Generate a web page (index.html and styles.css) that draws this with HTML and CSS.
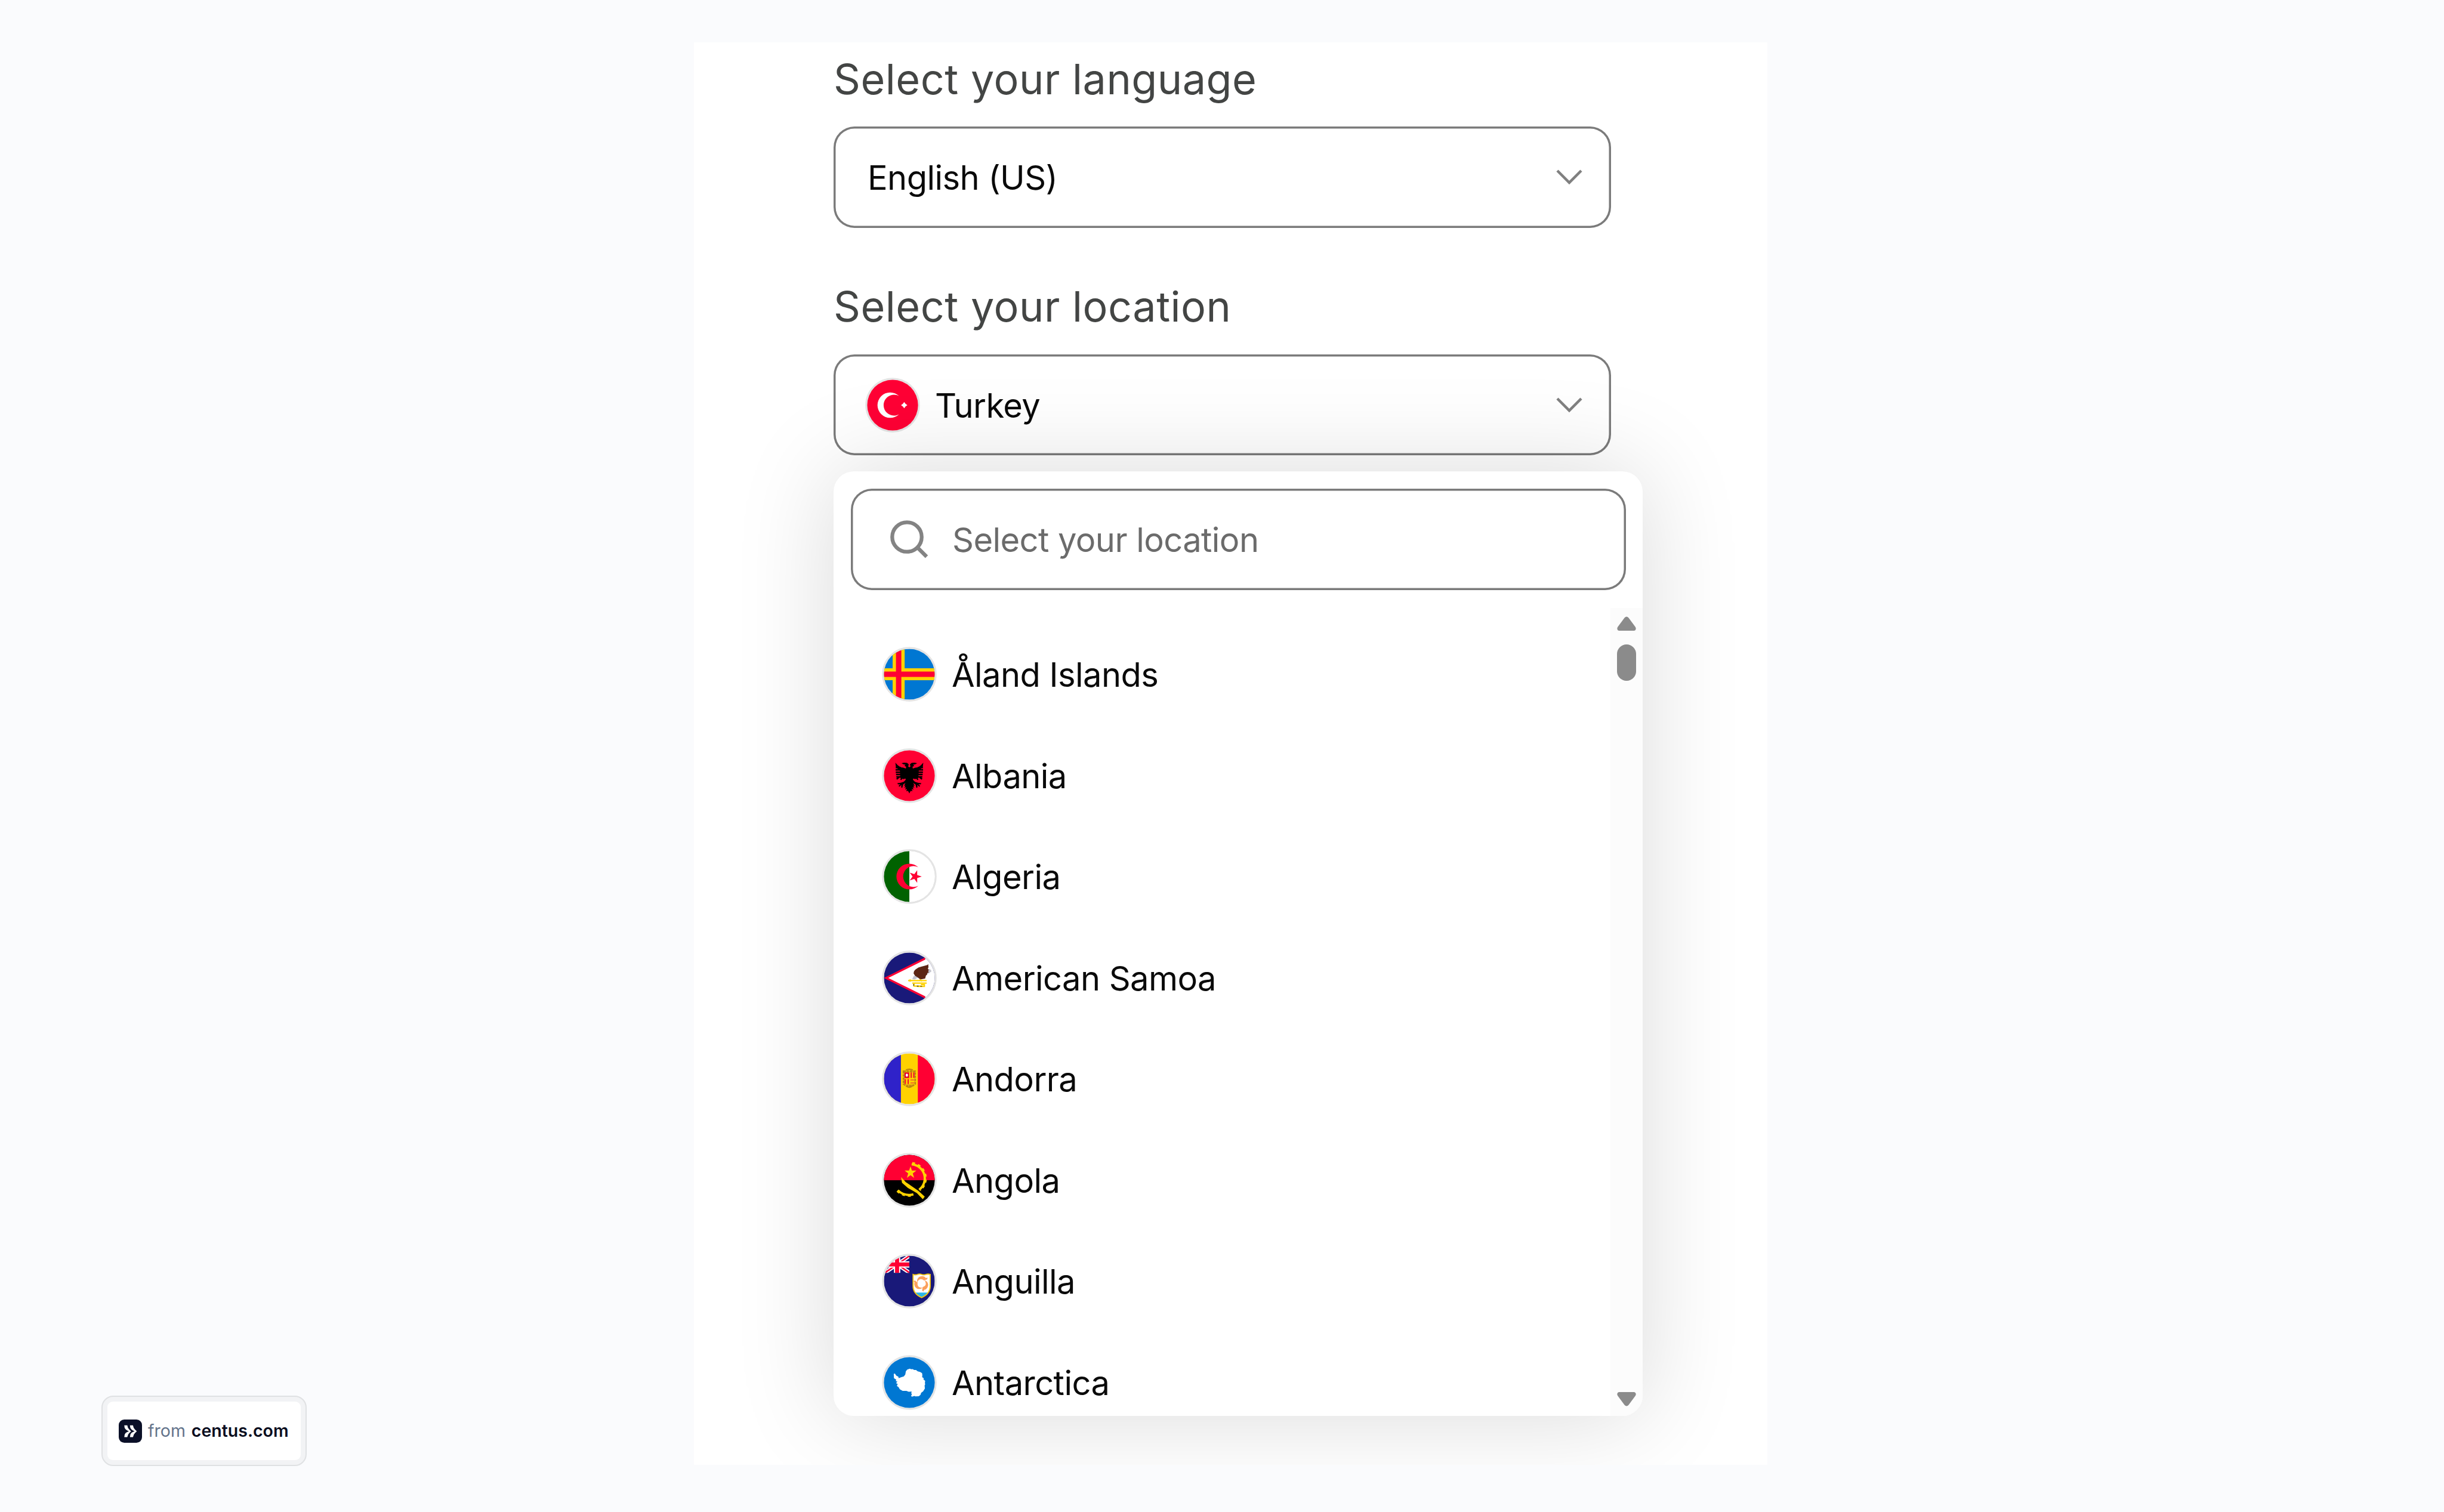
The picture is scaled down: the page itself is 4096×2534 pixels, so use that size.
FILE: index.html
```
<!DOCTYPE html>
<html lang="en">
<head>
  <meta charset="UTF-8" />
  <meta name="viewport" content="width=device-width, initial-scale=1.0"/>
  <title>Select your location</title>
  <link rel="stylesheet" href="styles.css">
</head>
<body>
<div class="page">
  <div class="side">
    <div class="badge">
      <div class="badge-inner">
        <svg class="badge-logo" viewBox="0 0 40 40">
          <rect width="40" height="40" rx="9.5" fill="#0b1028"/>
          <path id="chev" d="M9.5 10h5.2q.6 5 3.6 7.400l3 2.800-3 2.800q-3 2.400-3.600 7.200H9.500q0-4.800 2.400-7 2.200-2 5.600-3-3.400-1-5.600-3.200Q9.500 14.800 9.500 10z" fill="#fff"/>
          <use href="#chev" x="9.8"/>
        </svg>
        <span class="badge-from">from</span>
        <span class="badge-name">centus.com</span>
      </div>
    </div>
  </div>
  <main class="card">
    <div class="field">
      <label class="label">Select your language</label>
      <div class="select">
        <span>English (US)</span>
        <svg class="chevron" viewBox="0 0 44 26"><path d="M2 2l20 20L42 2"/></svg>
      </div>
    </div>
    <div class="field">
      <label class="label">Select your location</label>
      <div class="select">
        <svg class="flag flag-selected" viewBox="-3.5 -3.5 95 95">
          <circle class="ring" cx="44" cy="44" r="45.5"/>
          <circle cx="44" cy="44" r="44" fill="#ff0035"/>
          <path d="M55.2 28.3A22 22 0 1 0 55.2 59.7A18 18 0 1 1 55.2 28.3z" fill="#fff"/>
          <path d="M64 38.5l2.3 3.2 3.2 2.3-3.2 2.3-2.3 3.2-2.3-3.2-3.2-2.3 3.2-2.3z" fill="#fff"/>
        </svg>
        <span>Turkey</span>
        <svg class="chevron" viewBox="0 0 44 26"><path d="M2 2l20 20L42 2"/></svg>
      </div>
      <div class="dropdown">
        <div class="search">
          <svg class="search-icon" viewBox="0 0 66 66"><circle cx="29" cy="29" r="24.7"/><path d="M46.5 46.5L62 62"/></svg>
          <span>Select your location</span>
        </div>
        <div class="list">
          <div class="options">
            <div class="option">
              <svg class="flag" viewBox="-3.5 -3.5 95 95">
                <clipPath id="round"><circle cx="44" cy="44" r="44"/></clipPath>
                <circle class="ring" cx="44" cy="44" r="45.5"/>
                <g clip-path="url(#round)">
                  <rect width="88" height="88" fill="#0077d2"/>
                  <path d="M25.5 0v88M0 44h88" stroke="#ffd200" stroke-width="20.8"/>
                  <path d="M25.5 0v88M0 44h88" stroke="#ff0033" stroke-width="9.3"/>
                </g>
              </svg>
              <span>Åland Islands</span>
            </div>
            <div class="option">
              <svg class="flag" viewBox="-3.5 -3.5 95 95">
                <circle class="ring" cx="44" cy="44" r="45.5"/>
                <circle cx="44" cy="44" r="44" fill="#ff0033"/>
                <g id="eagle">
                  <path d="M44.5 30l-2.5-2 1-3.500-3-2.700-5-.3-4.500.8 3.500 2 3.500.5-2 2.200 3 1.500-.5 3-4.500-1.500-4.500-.5-5-3.500-4.200-4.500 1 8 7 6 .5 12 5.500 2.500 3.500-1 .5 2-3.500 3.500-6 2-5 .5 1 2 4-.3-3 3 1.500 1.500 3.500-3.500-.5 4.500 2 1 1.500-6 4-2.500-2.500 5 2.500-1-2 4.500 3-1.500-1.500 4.500 3-1.500-1 4.500 2.500-1L44 74l.5.500z"/>
                  <path d="M20.5 30h9M20.2 34h9M20.5 38h9M21 42h9M21.5 46h10M26 47l-4 3M33 46l-4 5" stroke="#000" stroke-width="2.5"/>
                </g>
                <use href="#eagle" transform="matrix(-1 0 0 1 88 0)"/>
              </svg>
              <span>Albania</span>
            </div>
            <div class="option">
              <svg class="flag" viewBox="-3.5 -3.5 95 95">
                <circle class="ring" cx="44" cy="44" r="45.5"/>
                <circle cx="44" cy="44" r="44" fill="#fff"/>
                <path d="M44 0a44 44 0 0 0 0 88z" fill="#006200"/>
                <path d="M59.5 28A22.3 22.3 0 1 0 59.5 60A18 18 0 1 1 59.5 28zM65.5 44l-7.9-2.6 0-8.3-5 6.700-7.900-2.600 4.900 6.800-4.900 6.800 7.900-2.600 5 6.700 0-8.300z" fill="#ff0033"/>
              </svg>
              <span>Algeria</span>
            </div>
            <div class="option">
              <svg class="flag" viewBox="-3.5 -3.5 95 95">
                <circle class="ring" cx="44" cy="44" r="45.5"/>
                <g clip-path="url(#round)">
                  <rect width="88" height="88" fill="#191979"/>
                  <path d="M0 44L71.5 8.5v71z" fill="#ff0033"/>
                  <path d="M7.5 44L71.5 12.3V0H88v88H71.5V75.7z" fill="#fff"/>
                  <path d="M75 29l4.500-.5 3 3.500-4.500 4-5 1.500zM57 39l-5.500 2-2.500 5 4.500.5 5-3z" fill="#c4c4cc"/>
                  <path d="M76.700 20l-1.500 1.500-5.500 1.500-5 1.300-5 1.700-5 3.300-2.500 2.700-.9 4 2.500 4 4.200 2.700 5 4 8.300-1.700 1.500-5.500 1.800-1 .5-3 2.500-1-1-2.200 1-2.300-1.500-2.200 1-2.300z" fill="#5c2614"/>
                  <path d="M42 48.5h32M62 46.5l4 3M49 53h25M52 54v4h12M58 58.5h12v-3h-6" fill="none" stroke="#ffd200" stroke-width="2.3"/>
                  <path d="M41.5 48.5l4-2.500 2.500 2.500-2.500 2.200z" fill="#ffd200"/>
                  <path d="M51.5 54.5v3M57 58h3M63 58.5h3" stroke="#222" stroke-width="1.2"/>
                </g>
              </svg>
              <span>American Samoa</span>
            </div>
            <div class="option">
              <svg class="flag" viewBox="-3.5 -3.5 95 95">
                <circle class="ring" cx="44" cy="44" r="45.5"/>
                <g clip-path="url(#round)">
                  <rect width="88" height="88" fill="#ffd200"/>
                  <rect width="29.4" height="88" fill="#2f22c9"/>
                  <rect x="58.7" width="29.3" height="88" fill="#ff0033"/>
                  <path d="M34 31h20v22l-5 3.500h-10l-5-3.500z" fill="#e2a818" stroke="#bd850f" stroke-width="3" stroke-dasharray="4 1.5"/>
                  <path d="M38 29q6-3 12 0M39 56.500q5 4 10 0" fill="none" stroke="#bd850f" stroke-width="2.5"/>
                  <rect x="35.7" y="32.8" width="17" height="20.7" fill="#ffd200"/>
                  <rect x="35.7" y="33" width="8" height="9.7" fill="#e2002c"/>
                  <ellipse cx="39.7" cy="37.7" rx="2" ry="2.8" fill="#fff"/>
                  <path d="M47.2 33v9.5M51.7 33v9.5M37 44.5v8.5M42 44.5v8.5" stroke="#f0142c" stroke-width="2.2"/>
                  <path d="M46 46h6.5M46 51h6.5" stroke="#f0642c" stroke-width="1.8"/>
                </g>
              </svg>
              <span>Andorra</span>
            </div>
            <div class="option">
              <svg class="flag" viewBox="-3.5 -3.5 95 95">
                <circle class="ring" cx="44" cy="44" r="45.5"/>
                <circle cx="44" cy="44" r="44"/>
                <path d="M0 44a44 44 0 0 1 88 0z" fill="#ff0033"/>
                <path d="M46 20l2.500 7.300H56.200L50 32l2.200 7.800L46 35.200l-6.200 4.600L42 32l-6.200-4.700h7.700z" fill="#ffd200"/>
                <g fill="none" stroke="#ffd200">
                  <path d="M48 16.5A24.5 24.5 0 0 1 61 60.5M24 61.5A29 29 0 0 0 51 68.5" stroke-width="4"/>
                  <path d="M49 14.2A26.7 26.7 0 0 1 62.5 61.5M23 62.7A31.2 31.2 0 0 0 51.5 70" stroke-width="3.5" stroke-dasharray="5 5.2"/>
                </g>
                <path d="M29.7 38.7l8.300 8.600 21.700 15 11 10-3.400 4.400-10.300-10.500-15.700-9-10-8.700z" fill="#ffd200"/>
              </svg>
              <span>Angola</span>
            </div>
            <div class="option">
              <svg class="flag" viewBox="-3.5 -3.5 95 95">
                <clipPath id="canton"><rect width="44" height="29.7"/></clipPath>
                <circle class="ring" cx="44" cy="44" r="45.5"/>
                <g clip-path="url(#round)">
                  <rect width="88" height="88" fill="#191979"/>
                  <g clip-path="url(#canton)">
                    <path d="M1 0l44 30M45 0L1 30" stroke="#fff" stroke-width="6.5"/>
                    <path d="M1 0l44 30M45 0L1 30" stroke="#ff0033" stroke-width="2.6"/>
                    <path d="M22.8 0v30M0 15.2h44" stroke="#fff" stroke-width="11"/>
                    <path d="M22.8 0v30M0 15.2h44" stroke="#ff0033" stroke-width="7"/>
                  </g>
                  <path d="M50.5 32.5q4 1.300 7.500 0 3.700-1.500 7.300 0 3.700 1.500 7.300 0 3.700-1.300 7.500 0v20Q80 66 65.300 72.500 50.500 66 50.500 52.500z" fill="#fff"/>
                  <path d="M53.5 64h23.500q-3.500 5-11.700 8.500Q57 69 53.500 64z" fill="#29b6e8"/>
                  <path d="M50.5 32.5q4 1.300 7.500 0 3.700-1.500 7.300 0 3.700 1.500 7.300 0 3.700-1.300 7.500 0v20Q80 66 65.300 72.500 50.500 66 50.500 52.500z" fill="none" stroke="#f0c414" stroke-width="2"/>
                  <g fill="#fba05c">
                    <path id="dolphin" d="M57.500 42q2-6.500 9-6.500 4 .2 6 3l3-.5-.5 3-3 1-2.500 1q-4-3.500-7.500-2-3 1.500-4.500 5.500z"/>
                    <use href="#dolphin" transform="rotate(120 65 48)"/>
                    <use href="#dolphin" transform="rotate(240 65 48)"/>
                  </g>
                </g>
              </svg>
              <span>Anguilla</span>
            </div>
            <div class="option">
              <svg class="flag" viewBox="-3.5 -3.5 95 95">
                <circle class="ring" cx="44" cy="44" r="45.5"/>
                <circle cx="44" cy="44" r="44" fill="#0077d2"/>
                <path d="M17 29l2-.5 2.500 3.500 3.500 2 .5 2.500 4-1.500 5-1.500 2.500-3.500 1-5.500 2.500-3 4.500-1.500 2 1 2.500-.3 3 1.500 3 0 3 2.500 4 1 3.500 2 .5 3.500-.3 3.500 3 2-1 1.500 3.200 3-.5 3.500.5 2.500-1 2 .5 5-3 5-3.500 2.500-1 3.500-3 2.500-6 .3-1.500-.8-4.500 1.300-1.500-1.500 1.500-2-1-2.500.5-3-5 .5-4-1.500-6.500 0-5-3-2-3.500-3-2 1.500-3.500-3-1.500 2.500-2.500-3-1 1-2.500-4-2.500z" fill="#fff"/>
              </svg>
              <span>Antarctica</span>
            </div>
          </div>
          <div class="scrollbar">
            <svg class="arrow" viewBox="0 0 32 24"><path d="M12.5 2.500q3.500-4 7 0L31 18q2 4.500-2 6H3q-4-1.500-2-6z"/></svg>
            <div class="thumb"></div>
            <svg class="arrow arrow-down" viewBox="0 0 32 24"><path d="M12.500 2.500q3.500-4 7 0L31 18q2 4.500-2 6H3q-4-1.500-2-6z"/></svg>
          </div>
        </div>
      </div>
    </div>
  </main>
</div>
</body>
</html>
```
FILE: styles.css
```
* {
  box-sizing: border-box;
}
body {
  margin: 0;
  width: 4096px;
  height: 2534px;
  overflow: hidden;
  background: #fafbfd;
  font-family: Inter, "Liberation Sans", sans-serif;
  font-size: 56px;
  letter-spacing: -0.55px;
  color: #0a0a0a;
}
.page {
  display: flex;
  padding-top: 71px;
}
.side {
  width: 1163px;
  height: 2386px;
  padding-left: 170px;
  display: flex;
  align-items: flex-end;
}
.badge {
  width: 344px;
  height: 118px;
  padding: 8px;
  border: 2px solid #dfe1e3;
  border-radius: 20px;
  background: #f2f3f5;
}
.badge-inner {
  height: 98px;
  padding-left: 19px;
  display: flex;
  align-items: center;
  border-radius: 9px;
  background: #fff;
  font-size: 28.5px;
  letter-spacing: 0;
}
.badge-logo {
  width: 39px;
  height: 39px;
  margin-right: 10px;
}
.badge-from,
.badge-name {
  padding-bottom: 2px;
}
.badge-from {
  color: #64748b;
  margin-right: 10px;
}
.badge-name {
  color: #0b0e1e;
  font-weight: 600;
}
.card {
  width: 1799px;
  height: 2384px;
  padding: 12px 263px 0 234px;
  background: #fff;
  overflow: hidden;
}
.field {
  position: relative;
  margin-bottom: 82.7px;
}
.label {
  display: block;
  margin-bottom: 29.3px;
  font-size: 70px;
  line-height: 100px;
  letter-spacing: 0.55px;
  color: #434544;
}
.select,
.search {
  display: flex;
  align-items: center;
  height: 169.5px;
  border-radius: 35px;
  box-shadow: inset 0 0 0 3.5px #7b7b7b;
}
.select {
  width: 1303px;
  padding: 0 48px 0 57px;
}
.select span,
.search span,
.option span {
  padding-top: 2px;
}
.chevron {
  width: 44px;
  height: 26px;
  margin-left: auto;
  fill: none;
  stroke: #808080;
  stroke-width: 4.5;
}
.flag {
  width: 92px;
  height: 92px;
  flex: none;
  margin-right: 25px;
}
.flag-selected {
  margin-left: -4px;
}
.ring {
  fill: none;
  stroke: #e4e4e4;
  stroke-width: 3.4;
}
/* menu floats over the card */
.dropdown {
  position: absolute;
  top: 326px;
  left: 0;
  width: 1356px;
  height: 1583px;
  padding-top: 29px;
  border-radius: 34px;
  background: #fff;
  box-shadow: 0 0 165px rgba(0, 0, 0, 0.15);
}
.search {
  margin: 0 28px 0 29px;
  padding-left: 65px;
  color: #6b6b6b;
}
.search-icon {
  width: 66px;
  height: 66px;
  margin-right: 39px;
  fill: none;
  stroke: #838383;
  stroke-width: 6.3;
}
.list {
  display: flex;
  height: 1354px;
  margin-top: 30px;
  overflow: hidden;
  border-radius: 0 0 34px 34px;
}
.options {
  flex: 1;
  padding-top: 26.5px;
}
.option {
  display: flex;
  align-items: center;
  height: 169.5px;
  padding-left: 81px;
}
.scrollbar {
  width: 54px;
  padding: 14.5px 0 15.5px 11px;
  display: flex;
  flex-direction: column;
  background: #fcfcfc;
}
.arrow {
  width: 32px;
  height: 24px;
  fill: #8b8b8b;
}
.arrow-down {
  margin-top: auto;
  transform: rotate(180deg);
}
.thumb {
  width: 32px;
  height: 61px;
  margin-top: 23px;
  border-radius: 16px;
  background: #8b8b8b;
}
```
